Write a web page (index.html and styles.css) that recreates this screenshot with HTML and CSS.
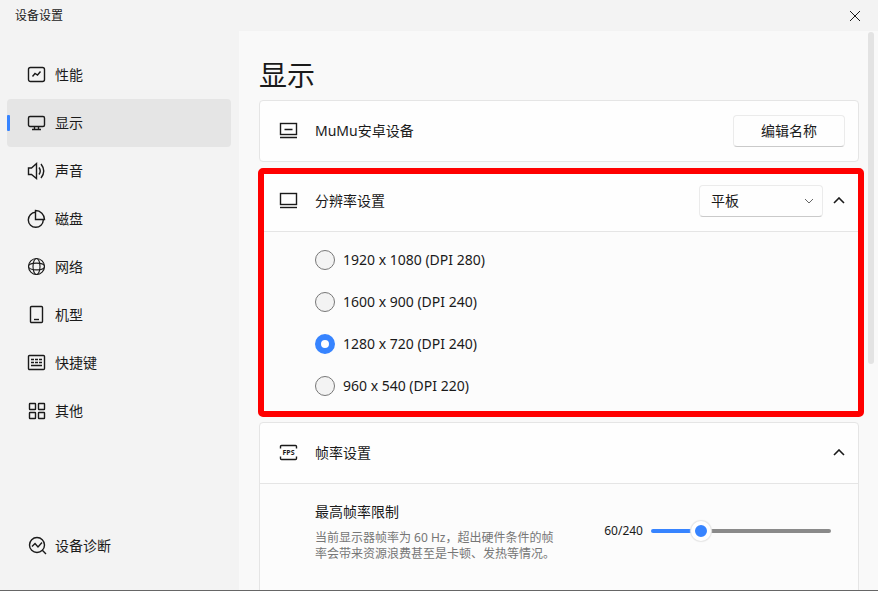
FILE: index.html
```html
<!DOCTYPE html>
<html lang="zh-CN">
<head>
<meta charset="utf-8">
<meta name="viewport" content="width=device-width, initial-scale=1">
<title>设备设置</title>
<link rel="stylesheet" href="styles.css">
</head>
<body>
<div class="window">
  <header class="titlebar">
    <span class="titlebar-text">设备设置</span>
    <button class="icon-button" type="button" aria-label="关闭">
      <svg class="close-icon" viewBox="0 0 12 12"><path d="M1 1l10 10M11 1L1 11"/></svg>
    </button>
  </header>

  <nav class="sidebar">
    <a class="nav-item" href="#performance">
      <svg class="icon" viewBox="0 0 20 20"><rect x="1.5" y="2.5" width="16" height="14" rx="2"/><path d="M5.5 11.500L8 8.500l2.500 1.500 3-3.500"/></svg>
      <span>性能</span>
    </a>
    <a class="nav-item nav-item-active" href="#display" aria-current="page">
      <svg class="icon" viewBox="0 0 20 20"><rect x="1.5" y="3.5" width="16" height="10" rx="1.5"/><path d="M7.5 13.5v3M11.5 13.5v3M5 16.500h9"/></svg>
      <span>显示</span>
    </a>
    <a class="nav-item" href="#sound">
      <svg class="icon" viewBox="0 0 20 20"><path d="M1.500 7v6.500h3L9.500 17.500V2.500L4.500 7z"/><path d="M12 6.500q2.500 3.500 0 7M14 3q5.500 7 0 14"/></svg>
      <span>声音</span>
    </a>
    <a class="nav-item" href="#disk">
      <svg class="icon" viewBox="0 0 20 20"><path d="M8.500 3.300A7.500 7.500 0 1 0 16.300 11"/><path d="M8.500 1.500v9h9A9 9 0 0 0 8.500 1.500z"/></svg>
      <span>磁盘</span>
    </a>
    <a class="nav-item" href="#network">
      <svg class="icon icon-thin" viewBox="0 0 20 20"><circle cx="9.500" cy="9.500" r="8"/><ellipse cx="9.500" cy="9.500" rx="3.500" ry="8"/><path d="M1.500 9.500c0-4.500 16-4.500 16 0s-16 4.500-16 0z"/></svg>
      <span>网络</span>
    </a>
    <a class="nav-item" href="#model">
      <svg class="icon" viewBox="0 0 20 20"><rect x="3.500" y="1.500" width="12" height="16" rx="1"/><path d="M7 14.500h5"/></svg>
      <span>机型</span>
    </a>
    <a class="nav-item" href="#shortcuts">
      <svg class="icon" viewBox="0 0 20 20"><rect x="1.500" y="2.500" width="16" height="14" rx="1"/><path d="M4 6.500h3M8 6.500h3M12 6.500h3M4 9.500h3M8 9.500h3M12 9.500h3M4 12.500h11"/></svg>
      <span>快捷键</span>
    </a>
    <a class="nav-item" href="#other">
      <svg class="icon" viewBox="0 0 20 20"><rect x="2.500" y="2.500" width="6" height="6" rx=".5"/><rect x="11.500" y="2.500" width="6" height="6" rx=".5"/><rect x="2.500" y="11.500" width="6" height="6" rx=".5"/><rect x="11.500" y="11.500" width="6" height="6" rx=".5"/></svg>
      <span>其他</span>
    </a>
    <a class="nav-item nav-item-last" href="#diagnose">
      <svg class="icon" viewBox="0 0 20 20"><circle cx="10" cy="9" r="7.500"/><path d="M15.300 14.300l3.700 3.700M5 10.500l3-3 3 3.500 4-4.500"/></svg>
      <span>设备诊断</span>
    </a>
  </nav>

  <main class="content">
    <h1 class="page-title">显示</h1>

    <section class="card">
      <div class="card-header">
        <svg class="icon" viewBox="0 0 20 20"><rect x="1.500" y="2.500" width="16" height="11"/><path d="M5.500 8.500h8M1 16.500h17"/></svg>
        <h2 class="card-title">MuMu安卓设备</h2>
        <button class="button" type="button">编辑名称</button>
      </div>
    </section>

    <section class="card card-marked">
      <div class="card-header">
        <svg class="icon" viewBox="0 0 20 20"><rect x="1.500" y="2.500" width="16" height="11"/><path d="M1 16.500h17"/></svg>
        <h2 class="card-title" id="resolution-title">分辨率设置</h2>
        <div class="select-box">
          <select class="select" aria-labelledby="resolution-title">
            <option>平板</option>
          </select>
          <svg class="select-arrow" viewBox="0 0 10 6"><path d="M1 1l4 4 4-4"/></svg>
        </div>
        <button class="icon-button" type="button" aria-label="收起分辨率设置">
          <svg class="chevron" viewBox="0 0 12 8"><path d="M1 6l5-5 5 5"/></svg>
        </button>
      </div>
      <div class="card-body radio-list" role="radiogroup" aria-labelledby="resolution-title">
        <label class="radio-row"><input class="radio" type="radio" name="resolution">1920 x 1080 (DPI 280)</label>
        <label class="radio-row"><input class="radio" type="radio" name="resolution">1600 x 900 (DPI 240)</label>
        <label class="radio-row"><input class="radio" type="radio" name="resolution" checked>1280 x 720 (DPI 240)</label>
        <label class="radio-row"><input class="radio" type="radio" name="resolution">960 x 540 (DPI 220)</label>
      </div>
    </section>

    <section class="card">
      <div class="card-header">
        <svg class="icon" viewBox="0 0 20 20"><path d="M1.500 5.500v-2q0-1 1-1h14q1 0 1 1v2M1.500 13.500v2q0 1 1 1h14q1 0 1-1v-2"/><text class="icon-text" x="9.500" y="12" text-anchor="middle">FPS</text></svg>
        <h2 class="card-title">帧率设置</h2>
        <button class="icon-button" type="button" aria-label="收起帧率设置">
          <svg class="chevron" viewBox="0 0 12 8"><path d="M1 6l5-5 5 5"/></svg>
        </button>
      </div>
      <div class="card-body fps-row">
        <div class="fps-text">
          <label class="fps-label" for="fps-limit">最高帧率限制</label>
          <p class="fps-note">当前显示器帧率为 60 Hz，超出硬件条件的帧<br>率会带来资源浪费甚至是卡顿、发热等情况。</p>
        </div>
        <div class="fps-control">
          <output class="fps-value" for="fps-limit">60/240</output>
          <input class="slider" id="fps-limit" type="range" min="0" max="240" value="60">
        </div>
      </div>
    </section>
    <div class="scrollbar"></div>
  </main>
</div>
</body>
</html>
```
FILE: styles.css
```css
* {
  box-sizing: border-box;
}

body {
  margin: 0;
  background: #f3f3f3;
  color: #1a1a1a;
  font: 14px/20px "Noto Sans", "Noto Sans CJK SC", sans-serif;
}

.window {
  display: grid;
  grid-template: 31px minmax(0, 1fr) / 239px minmax(0, 1fr);
  height: 100vh;
  border-bottom: 1px solid #666;
}

.titlebar {
  grid-column: 1 / -1;
  display: flex;
  align-items: center;
  justify-content: space-between;
  padding: 0 17px 0 15px;
  font-size: 12px;
}

.icon-button {
  display: flex;
  padding: 0;
  border: 0;
  background: none;
}

.icon,
.close-icon,
.chevron,
.select-arrow {
  flex: none;
  fill: none;
  stroke: #1a1a1a;
}

.icon {
  width: 20px;
  height: 20px;
  stroke-width: 1.4;
}

.icon-thin {
  stroke-width: 1.1;
}

.icon-text {
  fill: #1a1a1a;
  stroke: none;
  font: bold 7px "Open Sans", sans-serif;
}

.close-icon {
  width: 12px;
  height: 12px;
}

.chevron {
  width: 12px;
  height: 8px;
  stroke-width: 1.6;
}

.sidebar {
  display: flex;
  flex-direction: column;
  padding: 20px 8px 20px 7px;
}

.nav-item {
  position: relative;
  display: flex;
  flex: none;
  align-items: center;
  gap: 8px;
  height: 48px;
  padding-left: 20px;
  border-radius: 4px;
  color: inherit;
  text-decoration: none;
}

.nav-item-active {
  background: #e5e5e5;
}

.nav-item-active::before {
  content: "";
  position: absolute;
  left: 0;
  width: 3px;
  height: 16px;
  border-radius: 1px;
  background: #3784ff;
}

.nav-item-last {
  margin-top: auto;
}

.content {
  position: relative;
  display: flex;
  flex-direction: column;
  gap: 8px;
  padding: 27px 19px 0 20px;
  overflow: hidden;
  background: #f9f9f9;
}

.page-title {
  margin: 0;
  font-size: 28px;
  font-weight: 400;
  line-height: 34px;
}

.card {
  position: relative;
  flex: none;
  border: 1px solid #e5e5e5;
  border-radius: 4px;
  background: #fefefe;
}

.card-marked::after {
  content: "";
  position: absolute;
  inset: -3px -6px -4px -2px;
  border: 6px solid #f00;
  border-radius: 5px;
  pointer-events: none;
}

.card-header {
  display: flex;
  align-items: center;
  height: 60px;
  padding: 0 13px 0 19px;
}

.card-title {
  flex: 1;
  margin: 0 0 0 16px;
  font-size: 14px;
  font-weight: 400;
}

.button,
.select {
  height: 32px;
  border: 1px solid #ebebeb;
  border-bottom-color: #cacaca;
  border-radius: 4px;
  background: #fefefe;
  color: inherit;
  font: inherit;
}

.button {
  width: 112px;
}

.select-box {
  position: relative;
  margin-right: 10px;
}

.select {
  width: 124px;
  padding: 0 30px 0 11px;
  appearance: none;
}

.select-arrow {
  position: absolute;
  top: 13px;
  right: 9px;
  width: 10px;
  height: 6px;
  stroke: #666;
  pointer-events: none;
}

.card-body {
  border-top: 1px solid #e5e5e5;
  border-radius: 0 0 4px 4px;
  background: #fcfcfc;
}

.radio-list {
  padding: 7px 55px 6px;
}

.radio-row {
  display: flex;
  align-items: center;
  gap: 8px;
  height: 42px;
}

.radio {
  width: 20px;
  height: 20px;
  margin: 0;
  appearance: none;
  border: 1px solid #777;
  border-radius: 50%;
  background: #f3f3f3;
}

.radio:checked {
  border: 6px solid #3784ff;
  background: #fff;
}

.fps-row {
  display: flex;
  justify-content: space-between;
  padding: 18px 27px 48px 55px;
}

.fps-note {
  margin: 8px 0 0;
  color: #767676;
  font-size: 12px;
  line-height: 16px;
  white-space: nowrap;
}

.fps-control {
  display: flex;
  align-items: center;
  gap: 8px;
  height: 58px;
}

.fps-value {
  font-size: 12px;
}

.slider {
  width: 180px;
  height: 20px;
  margin: 0;
  appearance: none;
  background: none;
}

.slider::-webkit-slider-runnable-track {
  height: 4px;
  border-radius: 2px;
  background: linear-gradient(to right, #3784ff 28%, #8a8a8a 28%);
}

.slider::-webkit-slider-thumb {
  width: 20px;
  height: 20px;
  margin-top: -8px;
  appearance: none;
  border: 4px solid #fff;
  border-radius: 50%;
  background: #3784ff;
  box-shadow: 0 0 1px 1px #e5e5e5;
}

.scrollbar {
  position: absolute;
  top: 1px;
  right: 4px;
  width: 6px;
  height: 59.4%;
  border-radius: 3px;
  background: #e3e3e3;
}
```
